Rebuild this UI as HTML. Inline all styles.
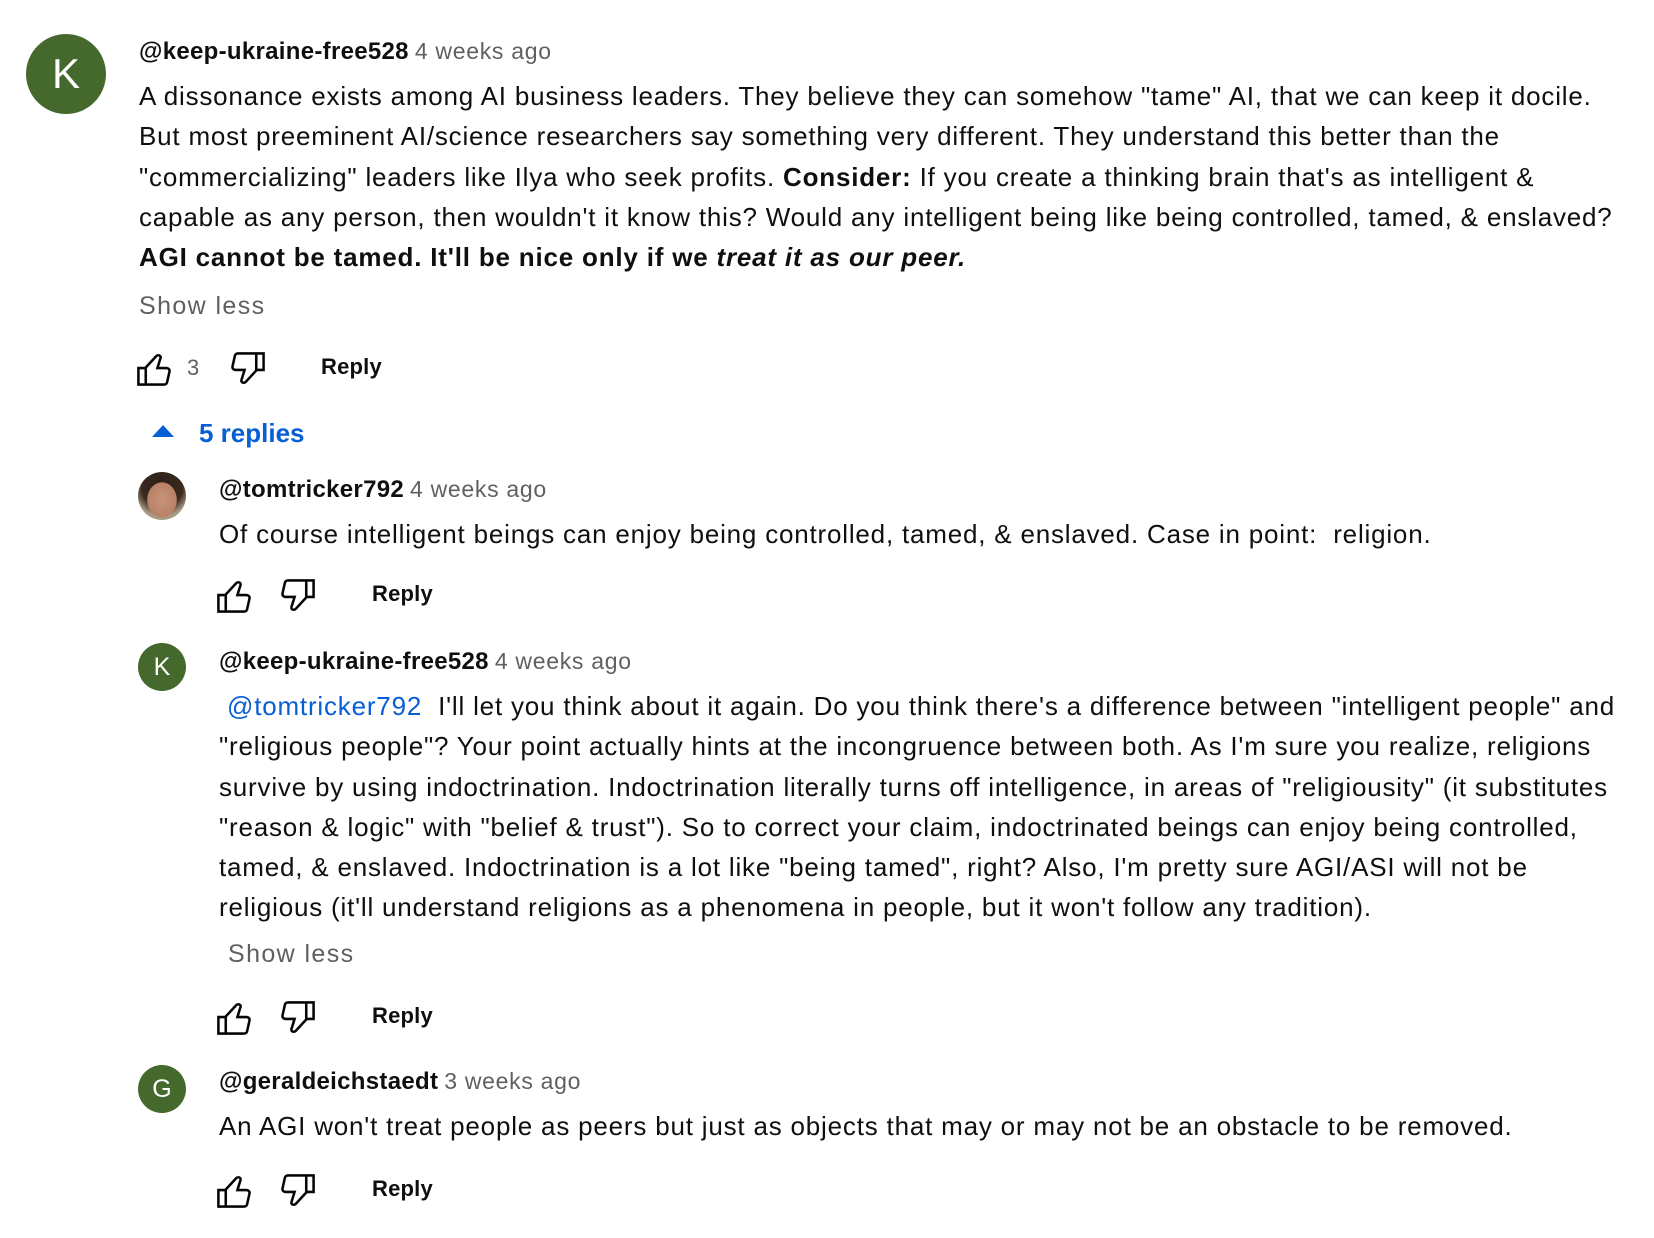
<!DOCTYPE html>
<html><head><meta charset="utf-8"><style>
body{margin:0;width:1654px;height:1238px;background:#fff;font-family:"Liberation Sans",Arial,sans-serif;color:#0f0f0f;position:relative;overflow:hidden}
.a{position:absolute;white-space:nowrap}
.av{position:absolute;border-radius:50%;background:#45692c;color:#fff;text-align:center}
.nm{font-weight:bold;font-size:24px;letter-spacing:0.3px}
.tm{font-weight:normal;color:#606060;font-size:23px;margin-left:6px;letter-spacing:0.7px}
.tx{font-size:26px;letter-spacing:0.8px;line-height:40.3px}
.sl{color:#606060;font-size:25px;letter-spacing:1.4px}
.rp{font-weight:bold;font-size:22px;letter-spacing:0.2px}
svg{position:absolute}
</style></head><body>
<svg width="0" height="0" style="position:absolute"><defs><path id="th" d="M18.77,11h-4.23l1.52-4.94C16.38,5.030,15.54,4,14.38,4c-0.58,0-1.14,0.24-1.520,0.65L7,11H3v10h4h1h9.43c1.06,0,1.98-0.67,2.19-1.61l1.34-6C21.230,12.15,20.18,11,18.77,11z M7,20H4v-8h3V20z M19.98,13.17l-1.34,6C18.54,19.65,18.03,20,17.43,20H8v-8.61l5.6-6.06C13.79,5.12,14.08,5,14.38,5c0.26,0,0.5,0.11,0.63,0.3c0.07,0.1,0.15,0.26,0.09,0.47l-1.52,4.94L13.18,12h1.35h4.23c0.41,0,0.8,0.17,1.03,0.46C19.920,12.61,20.05,12.86,19.98,13.17z" stroke="#0f0f0f" stroke-width="0.4"/></defs></svg>

<div class="av" style="left:26px;top:34px;width:80px;height:80px;line-height:80px;font-size:42px">K</div>
<div class="a nm" style="left:139px;top:38px">@keep-ukraine-free528<span class="tm">4 weeks ago</span></div>
<div class="a tx" style="left:139px;top:76px">A dissonance exists among AI business leaders. They believe they can somehow "tame" AI, that we can keep it docile.<br>But most preeminent AI/science researchers say something very different. They understand this better than the<br>"commercializing" leaders like Ilya who seek profits. <b>Consider:</b> If you create a thinking brain that's as intelligent &amp;<br>capable as any person, then wouldn't it know this? Would any intelligent being like being controlled, tamed, &amp; enslaved?<br><b>AGI cannot be tamed. It'll be nice only if we <i>treat it as our peer.</i></b></div>
<div class="a sl" style="left:139px;top:292px">Show less</div>
<svg style="left:132px;top:347px" width="44" height="44" viewBox="0 0 24 24"><use href="#th"/></svg>
<div class="a" style="left:187px;top:355px;font-size:22px;color:#606060">3</div>
<svg style="left:226px;top:347px;transform:rotate(180deg)" width="44" height="44" viewBox="0 0 24 24"><use href="#th"/></svg>
<div class="a rp" style="left:321px;top:354px">Reply</div>

<svg style="left:152px;top:424px" width="22" height="14" viewBox="0 0 22 14"><path d="M0 13 L11 1 L22 13Z" fill="#065fd4"/></svg>
<div class="a" style="left:199px;top:418px;font-size:26px;font-weight:bold;color:#065fd4;letter-spacing:0px">5 replies</div>

<div class="av" style="left:138px;top:472px;width:48px;height:48px;background:radial-gradient(ellipse 38% 45% at 50% 58%,#c8957a 0,#b98067 80%,transparent 82%),radial-gradient(circle at 50% 30%,#2a1e18 0,#3a2a20 50%,#a99a84 72%)"></div>
<div class="a nm" style="left:219px;top:476px">@tomtricker792<span class="tm">4 weeks ago</span></div>
<div class="a tx" style="left:219px;top:514px">Of course intelligent beings can enjoy being controlled, tamed, &amp; enslaved. Case in point:&nbsp; religion.</div>
<svg style="left:212px;top:574px" width="44" height="44" viewBox="0 0 24 24"><use href="#th"/></svg>
<svg style="left:276px;top:574px;transform:rotate(180deg)" width="44" height="44" viewBox="0 0 24 24"><use href="#th"/></svg>
<div class="a rp" style="left:372px;top:581px">Reply</div>

<div class="av" style="left:138px;top:643px;width:48px;height:48px;line-height:48px;font-size:25px">K</div>
<div class="a nm" style="left:219px;top:648px">@keep-ukraine-free528<span class="tm">4 weeks ago</span></div>
<div class="a tx" style="left:219px;top:686px"><span style="color:#065fd4;margin-left:8px">@tomtricker792</span>&nbsp; I'll let you think about it again. Do you think there's a difference between "intelligent people" and<br>"religious people"? Your point actually hints at the incongruence between both. As I'm sure you realize, religions<br>survive by using indoctrination. Indoctrination literally turns off intelligence, in areas of "religiousity" (it substitutes<br>"reason &amp; logic" with "belief &amp; trust"). So to correct your claim, indoctrinated beings can enjoy being controlled,<br>tamed, &amp; enslaved. Indoctrination is a lot like "being tamed", right? Also, I'm pretty sure AGI/ASI will not be<br>religious (it'll understand religions as a phenomena in people, but it won't follow any tradition).</div>
<div class="a sl" style="left:228px;top:940px">Show less</div>
<svg style="left:212px;top:996px" width="44" height="44" viewBox="0 0 24 24"><use href="#th"/></svg>
<svg style="left:276px;top:996px;transform:rotate(180deg)" width="44" height="44" viewBox="0 0 24 24"><use href="#th"/></svg>
<div class="a rp" style="left:372px;top:1003px">Reply</div>

<div class="av" style="left:138px;top:1065px;width:48px;height:48px;line-height:48px;font-size:25px">G</div>
<div class="a nm" style="left:219px;top:1068px">@geraldeichstaedt<span class="tm">3 weeks ago</span></div>
<div class="a tx" style="left:219px;top:1106px">An AGI won't treat people as peers but just as objects that may or may not be an obstacle to be removed.</div>
<svg style="left:212px;top:1169px" width="44" height="44" viewBox="0 0 24 24"><use href="#th"/></svg>
<svg style="left:276px;top:1169px;transform:rotate(180deg)" width="44" height="44" viewBox="0 0 24 24"><use href="#th"/></svg>
<div class="a rp" style="left:372px;top:1176px">Reply</div>
</body></html>
